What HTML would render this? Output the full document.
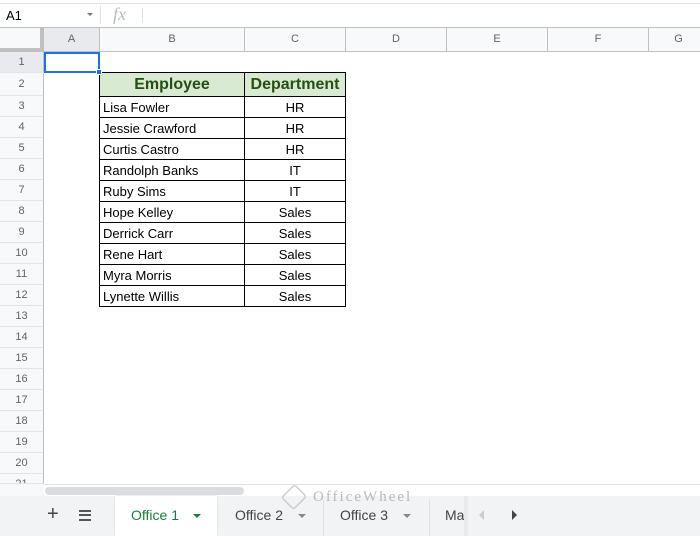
<!DOCTYPE html><html><head><style>
*{margin:0;padding:0;box-sizing:border-box}
body{width:700px;height:536px;overflow:hidden;background:#fff;font-family:"Liberation Sans",Arial,sans-serif;position:relative}
.a{position:absolute}
.rh{position:absolute;left:0;width:44px;height:21px;border-bottom:1px solid #e2e3e3;border-right:1px solid #c0c0c0;background:#f8f9fa;color:#5f6368;font-size:11px;text-align:center;line-height:20px}
.ch{position:absolute;top:28px;height:24px;border-right:1px solid #c0c0c0;border-bottom:1px solid #c0c0c0;background:#f8f9fa;color:#5f6368;font-size:11px;text-align:center;line-height:22px}
table{position:absolute;left:99px;top:72px;border-collapse:collapse;font-size:13px;table-layout:fixed}
td{border:1px solid #000;height:21px;padding:0 3px}
td.c{text-align:center}
th{background:#d9ead3;color:#274e13;font-size:16px;border:1px solid #000;height:24px}
</style></head><body>
<div class="a" style="left:0;top:3px;width:700px;height:1px;background:#e0e0e0"></div>
<div class="a" style="left:6px;top:8px;font-size:13px;color:#000">A1</div>
<div class="a" style="left:87px;top:13px;width:0;height:0;border-left:3px solid transparent;border-right:3px solid transparent;border-top:3px solid #777"></div>
<div class="a" style="left:100px;top:6px;width:1px;height:18px;background:#e0e0e0"></div>
<div class="a" style="left:113px;top:4px;font-family:'Liberation Serif',serif;font-style:italic;font-size:18px;color:#bbb">fx</div>
<div class="a" style="left:142px;top:8px;width:1px;height:14px;background:#e0e0e0"></div>
<div class="a" style="left:0;top:27px;width:700px;height:1px;background:#c0c0c0"></div>
<div class="a" style="left:0;top:28px;width:44px;height:24px;background:#f8f9fa;border-right:4px solid #c0c0c0;border-bottom:4px solid #c0c0c0"></div>
<div class="ch" style="left:44px;width:56px;background:#e8eaed">A</div>
<div class="ch" style="left:100px;width:145px">B</div>
<div class="ch" style="left:245px;width:101px">C</div>
<div class="ch" style="left:346px;width:101px">D</div>
<div class="ch" style="left:447px;width:101px">E</div>
<div class="ch" style="left:548px;width:101px">F</div>
<div class="ch" style="left:649px;width:60px">G</div>
<div class="rh" style="top:52px;background:#e8eaed">1</div><div class="rh" style="top:73px;height:23px;line-height:22px">2</div><div class="rh" style="top:96px">3</div><div class="rh" style="top:117px">4</div><div class="rh" style="top:138px">5</div><div class="rh" style="top:159px">6</div><div class="rh" style="top:180px">7</div><div class="rh" style="top:201px">8</div><div class="rh" style="top:222px">9</div><div class="rh" style="top:243px">10</div><div class="rh" style="top:264px">11</div><div class="rh" style="top:285px">12</div><div class="rh" style="top:306px">13</div><div class="rh" style="top:327px">14</div><div class="rh" style="top:348px">15</div><div class="rh" style="top:369px">16</div><div class="rh" style="top:390px">17</div><div class="rh" style="top:411px">18</div><div class="rh" style="top:432px">19</div><div class="rh" style="top:453px">20</div><div class="rh" style="top:474px;height:10px;overflow:hidden">21</div>
<table>
<tr><th style="width:145px">Employee</th><th style="width:101px">Department</th></tr>
<tr><td>Lisa Fowler</td><td class="c">HR</td></tr>
<tr><td>Jessie Crawford</td><td class="c">HR</td></tr>
<tr><td>Curtis Castro</td><td class="c">HR</td></tr>
<tr><td>Randolph Banks</td><td class="c">IT</td></tr>
<tr><td>Ruby Sims</td><td class="c">IT</td></tr>
<tr><td>Hope Kelley</td><td class="c">Sales</td></tr>
<tr><td>Derrick Carr</td><td class="c">Sales</td></tr>
<tr><td>Rene Hart</td><td class="c">Sales</td></tr>
<tr><td>Myra Morris</td><td class="c">Sales</td></tr>
<tr><td>Lynette Willis</td><td class="c">Sales</td></tr>
</table>
<div class="a" style="left:44px;top:52px;width:56px;height:21px;border:2px solid #1a73e8"></div>
<div class="a" style="left:96px;top:69px;width:6px;height:6px;background:#1a73e8;border:1px solid #fff"></div>
<div class="a" style="left:0;top:484px;width:700px;height:12px;background:#fff;border-top:1px solid #e0e0e0"></div>
<div class="a" style="left:0;top:484px;width:44px;height:12px;background:#f8f9fa"></div>
<div class="a" style="left:45px;top:487px;width:199px;height:8px;border-radius:4px;background:#dadce0"></div>
<div class="a" style="left:0;top:496px;width:700px;height:40px;background:#f1f3f4"></div>
<div class="a" style="left:47px;top:503px;font-size:20px;color:#444">+</div>
<div class="a" style="left:79px;top:510px;width:12px;height:11px;border-top:2px solid #555;border-bottom:2px solid #555"></div>
<div class="a" style="left:79px;top:514px;width:12px;height:3px;border-top:2px solid #555"></div>
<div class="a" style="left:115px;top:496px;width:102px;height:40px;background:#fff;box-shadow:0 0 2px #ccc"></div>
<div class="a" style="left:131px;top:507px;font-size:14px;color:#188038">Office 1</div>
<div class="a" style="left:193px;top:514px;border-left:4px solid transparent;border-right:4px solid transparent;border-top:4px solid #188038"></div>
<div class="a" style="left:235px;top:507px;font-size:14px;color:#444">Office 2</div>
<div class="a" style="left:298px;top:514px;border-left:4px solid transparent;border-right:4px solid transparent;border-top:4px solid #888"></div>
<div class="a" style="left:323px;top:500px;width:1px;height:36px;background:#e0e0e0"></div>
<div class="a" style="left:340px;top:507px;font-size:14px;color:#444">Office 3</div>
<div class="a" style="left:403px;top:514px;border-left:4px solid transparent;border-right:4px solid transparent;border-top:4px solid #888"></div>
<div class="a" style="left:429px;top:500px;width:1px;height:36px;background:#e0e0e0"></div>
<div class="a" style="left:445px;top:507px;font-size:14px;color:#444;width:19px;overflow:hidden;white-space:nowrap">Master</div>
<div class="a" style="left:464px;top:496px;width:4px;height:40px;background:#e8eaed"></div>
<div class="a" style="left:479px;top:510px;border-top:5px solid transparent;border-bottom:5px solid transparent;border-right:5px solid #ccc"></div>
<div class="a" style="left:512px;top:510px;border-top:5px solid transparent;border-bottom:5px solid transparent;border-left:5px solid #444"></div>
<div class="a" style="left:313px;top:489px;font-family:'Liberation Serif',serif;font-size:15px;letter-spacing:2px;color:#aaa;opacity:.8">OfficeWheel</div>
<div class="a" style="left:282px;top:484px;width:24px;height:26px;border:2px solid #bbb;border-radius:4px;transform:rotate(45deg) scale(.75);opacity:.7"></div>
</body></html>
